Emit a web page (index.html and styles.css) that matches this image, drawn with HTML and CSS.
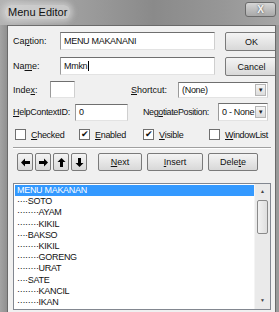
FILE: index.html
```html
<!DOCTYPE html>
<html lang="en">
<head>
    <meta charset="UTF-8">
    <title>Menu Editor</title>
    <link rel="stylesheet" href="styles.css">
</head>
<body>
    <div class="window">
        <div class="titlebar">
            <span class="title">Menu Editor</span>
            <span class="close">X</span>
        </div>
        <div class="content">
            <div class="top">
                <label class="lbl">Ca<u>p</u>tion:</label>
                <div class="input wide">MENU MAKANANI</div>
                <button class="btn">OK</button>
                <label class="lbl">Na<u>m</u>e:</label>
                <div class="input wide">Mmkn<span class="caret"></span></div>
                <button class="btn">Cancel</button>
            </div>

            <div class="row r-index">
                <label class="lbl l-index">Inde<u>x</u>:</label>
                <div class="input small"></div>
                <label class="lbl l-short"><u>S</u>hortcut:</label>
                <div class="combo c-short"><span>(None)</span><i class="drop">&#9660;</i></div>
            </div>

            <div class="row r-help">
                <label class="lbl l-help"><u>H</u>elpContextID:</label>
                <div class="input mid">0</div>
                <label class="lbl l-neg">Neg<u>o</u>tiatePosition:</label>
                <div class="combo c-neg"><span>0 - None</span><i class="drop">&#9660;</i></div>
            </div>

            <div class="checks">
                <div class="chk w1"><span class="box"></span><u>C</u>hecked</div>
                <div class="chk w1"><span class="box on">&#10004;</span><u>E</u>nabled</div>
                <div class="chk w2"><span class="box on">&#10004;</span><u>V</u>isible</div>
                <div class="chk"><span class="box"></span><u>W</u>indowList</div>
            </div>

            <div class="sep"></div>

            <div class="tools">
                <button class="btn arrow"><svg width="9" height="9" viewBox="0 0 9 9"><path d="M0 4.5 L4 0.5 V3 H9 V6 H4 V8.5 Z" fill="#000"/></svg></button>
                <button class="btn arrow"><svg width="9" height="9" viewBox="0 0 9 9"><path d="M9 4.5 L5 0.5 V3 H0 V6 H5 V8.5 Z" fill="#000"/></svg></button>
                <button class="btn arrow"><svg width="9" height="9" viewBox="0 0 9 9"><path d="M4.5 0 L8.5 4 H6 V9 H3 V4 H0.5 Z" fill="#000"/></svg></button>
                <button class="btn arrow"><svg width="9" height="9" viewBox="0 0 9 9"><path d="M4.5 9 L8.5 5 H6 V0 H3 V5 H0.5 Z" fill="#000"/></svg></button>
                <button class="btn b-next"><u>N</u>ext</button>
                <button class="btn b-insert"><u>I</u>nsert</button>
                <button class="btn b-delete">Dele<u>t</u>e</button>
            </div>

            <div class="list">
                <ul class="items">
                    <li class="sel">MENU MAKANAN</li>
                    <li>····SOTO</li>
                    <li>········AYAM</li>
                    <li>········KIKIL</li>
                    <li>····BAKSO</li>
                    <li>········KIKIL</li>
                    <li>········GORENG</li>
                    <li>········URAT</li>
                    <li>····SATE</li>
                    <li>········KANCIL</li>
                    <li>········IKAN</li>
                </ul>
                <div class="scroll">
                    <span class="sarrow">&#9650;</span>
                    <span class="thumb"></span>
                    <span class="sarrow bottom">&#9660;</span>
                </div>
            </div>
        </div>
    </div>
</body>
</html>
```

FILE: styles.css
```css
body {
    margin: 0;
    width: 279px;
    height: 312px;
    overflow: hidden;
    font-family: "Liberation Sans", Arial, sans-serif;
    font-size: 9px;
    color: #111;
}
.window {
    height: 312px;
    background: linear-gradient(90deg, #a4a4a4, #8c8c8c 3%, #9a9a9a);
    display: flex;
    flex-direction: column;
}
.titlebar {
    height: 25px;
    position: relative;
    background: linear-gradient(90deg, #b4b4b4, #a0a0a0 25%, #8a8a8a 55%, #979797 80%, #a6a6a6);
}
.title {
    position: absolute;
    left: 5px;
    top: 5px;
    padding: 1px 3px;
    font-family: "Liberation Sans", Arial, sans-serif;
    font-size: 11px;
    color: #111;
    background: rgba(225, 225, 225, 0.6);
    border-radius: 6px;
    box-shadow: 0 0 5px 3px rgba(225, 225, 225, 0.5);
}
.close {
    position: absolute;
    right: 3px;
    top: 2px;
    width: 29px;
    height: 13px;
    border: 1px solid #6a6a6a;
    border-radius: 3px;
    background: linear-gradient(180deg, #d6d6d6, #a8a8a8);
    color: #f4f4f4;
    font-weight: bold;
    font-size: 10px;
    text-align: center;
    line-height: 13px;
    text-shadow: 0 0 2px #444;
}
.content {
    flex: 1;
    margin: 0 3px 0 7px;
    background: #f0f0f0;
    border: 1px solid #6a6a6a;
    border-bottom: none;
    padding: 6px 0 0 5px;
    overflow: hidden;
}
u {
    text-decoration: underline;
}
.lbl {
    display: flex;
    align-items: center;
    white-space: nowrap;
}
.input {
    background: #fff;
    border: 1px solid #8a8a8a;
    border-color: #6f6f6f #cfcfcf #e3e3e3 #9a9a9a;
    box-sizing: border-box;
    display: flex;
    align-items: center;
    padding-left: 3px;
    font-size: 9px;
    letter-spacing: -0.3px;
}
.caret {
    display: inline-block;
    width: 1px;
    height: 10px;
    background: #000;
    margin-left: 1px;
}
.btn {
    font-family: "Liberation Sans", Arial, sans-serif;
    font-size: 9px;
    color: #111;
    background: linear-gradient(180deg, #f4f4f4, #e6e6e6 50%, #d8d8d8);
    border: 1px solid #7a7a7a;
    border-radius: 2px;
    padding: 0;
    box-sizing: border-box;
    height: 18px;
}
.top {
    display: grid;
    grid-template-columns: 37px 155px 53px;
    column-gap: 10px;
    row-gap: 7px;
    grid-auto-rows: 18px;
}
.top .btn {
    height: 19px;
}
.row {
    display: flex;
    align-items: center;
}
.r-index {
    margin-top: 6px;
    height: 17px;
}
.l-index {
    width: 37px;
}
.small {
    width: 25px;
    height: 17px;
}
.l-short {
    width: 47px;
    margin-left: 56px;
}
.combo {
    background: #fff;
    border: 1px solid #8a8a8a;
    border-color: #6f6f6f #cfcfcf #e3e3e3 #9a9a9a;
    box-sizing: border-box;
    display: flex;
    align-items: center;
    justify-content: space-between;
    padding-left: 3px;
    letter-spacing: -0.3px;
}
.c-short {
    width: 90px;
    height: 16px;
}
.c-neg {
    width: 50px;
    height: 18px;
    margin-left: 3px;
}
.drop {
    font-style: normal;
    font-size: 6px;
    width: 11px;
    height: 12px;
    margin-right: 1px;
    display: flex;
    align-items: center;
    justify-content: center;
    border: 1px solid #b5b5b5;
    background: linear-gradient(180deg, #f6f6f6, #dcdcdc);
    color: #222;
    box-sizing: border-box;
}
.r-help {
    margin-top: 5px;
    height: 18px;
}
.l-help {
    width: 62px;
    letter-spacing: -0.3px;
}
.mid {
    width: 53px;
    height: 17px;
}
.l-neg {
    margin-left: 15px;
    width: 72px;
    letter-spacing: -0.4px;
}
.checks {
    display: flex;
    margin-top: 7px;
    padding-left: 2px;
    height: 13px;
    align-items: center;
}
.chk {
    display: flex;
    align-items: center;
    letter-spacing: -0.3px;
}
.w1 {
    width: 64px;
}
.w2 {
    width: 66px;
}
.box {
    width: 11px;
    height: 11px;
    box-sizing: border-box;
    border: 1px solid #6f6f6f;
    background: #fff;
    margin-right: 5px;
    font-size: 9px;
    line-height: 9px;
    text-align: center;
    color: #111;
}
.sep {
    margin-top: 6px;
    margin-right: 4px;
    border-top: 1px solid #a0a0a0;
    border-bottom: 1px solid #fff;
}
.tools {
    display: flex;
    margin-top: 4px;
    padding-left: 4px;
}
.arrow {
    width: 16px;
    margin-right: 2px;
    display: flex;
    align-items: center;
    justify-content: center;
}
.b-next {
    width: 44px;
    margin-left: 9px;
}
.b-insert {
    width: 56px;
    margin-left: 5px;
}
.b-delete {
    width: 50px;
    margin-left: 5px;
}
.list {
    margin-top: 12px;
    width: 258px;
    height: 127px;
    box-sizing: border-box;
    border: 1px solid #828790;
    background: #fff;
    display: flex;
}
.items {
    list-style: none;
    margin: 0;
    padding: 1px 0 0 1px;
    flex: 1;
}
.items li {
    height: 11.2px;
    line-height: 11px;
    padding-left: 2px;
    letter-spacing: -0.3px;
    white-space: nowrap;
}
.items .sel {
    background: #3399ff;
    color: #fff;
}
.scroll {
    width: 15px;
    background: #eaeaea;
    display: flex;
    flex-direction: column;
    align-items: center;
    border-left: 1px solid #f4f4f4;
}
.sarrow {
    font-size: 5px;
    height: 13px;
    line-height: 13px;
    color: #444;
    margin-top: 1px;
}
.sarrow.bottom {
    margin-top: auto;
    margin-bottom: 2px;
}
.thumb {
    width: 11px;
    height: 34px;
    margin-top: 2px;
    box-sizing: border-box;
    border: 1px solid #8a8a8a;
    border-radius: 2px;
    background: linear-gradient(90deg, #f2f2f2, #dedede);
}
```
